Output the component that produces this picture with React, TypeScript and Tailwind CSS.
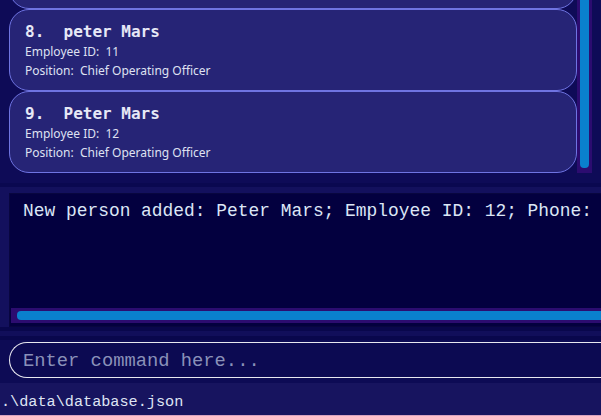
const mono = "font-['DejaVu_Sans_Mono','Liberation_Mono',monospace]";
const lightMono = "font-['Liberation_Mono','DejaVu_Sans_Mono',monospace]";
const sans = "font-['Noto_Sans','Open_Sans',sans-serif]";

type Person = { index: number; name: string; id: number; position: string };

const people: Person[] = [
  { index: 8, name: "peter Mars", id: 11, position: "Chief Operating Officer" },
  { index: 9, name: "Peter Mars", id: 12, position: "Chief Operating Officer" },
];

function PersonCard({ p }: { p: Person }) {
  return (
    <div className="h-[82px] shrink-0 rounded-[20px] border border-[#6f74e2] bg-[#262476] pl-[15px] pt-[12px]">
      <div className={`${mono} text-[16px] font-bold leading-[20px] text-[#e6e8f6] whitespace-pre`}>
        {p.index}.  {p.name}
      </div>
      <div className={`${sans} text-[12px] leading-[19px] text-[#dfe1f2] whitespace-pre`}>
        Employee ID:  {p.id}
      </div>
      <div className={`${sans} text-[12px] leading-[19px] text-[#dfe1f2] whitespace-pre`}>
        Position:  {p.position}
      </div>
    </div>
  );
}

export default function App() {
  return (
    <div className="w-[601px] h-[416px] overflow-hidden bg-[#0e0b57] flex flex-col">
      {/* person list, scrolled to the bottom */}
      <div className="h-[173px] shrink-0 flex">
        <div className="flex-1 pl-[9px] flex flex-col justify-end overflow-hidden">
          {/* previous card, only its bottom edge is in view */}
          <div className="h-[82px] shrink-0 rounded-[20px] border border-[#6f74e2] bg-[#262476]" />
          {people.map((p) => (
            <PersonCard key={p.index} p={p} />
          ))}
        </div>
        <div className="w-[15px] h-[173px] bg-[#2c0c70] px-[3px]">
          <div className="h-[168px] w-full rounded-b-[4px] bg-[#0a80cd]" />
        </div>
        <div className="w-[9px]" />
      </div>

      <div className="h-[10px] shrink-0" />
      <div className="h-[4px] shrink-0 bg-[#0a0850]" />

      {/* result display */}
      <div className="shrink-0 bg-[#13105d] pl-[9px] pt-[6px]">
        <div className="h-[134px] border border-r-0 border-[#08063f] bg-[#03003f] flex flex-col">
          <div
            className={`${lightMono} flex-1 pl-[13px] pt-[6px] text-[17.9px] leading-[22px] text-[#dce6f6] whitespace-pre overflow-hidden`}
          >
            New person added: Peter Mars; Employee ID: 12; Phone:
          </div>
          <div className="h-[15px] ml-[1px] mb-[3px] bg-[#2c0c70] pt-[3px] pl-[6px]">
            <div className="h-[9px] rounded-l-[4px] bg-[#0a80cd]" />
          </div>
        </div>
      </div>

      <div className="h-[4px] shrink-0 bg-[#09074c]" />
      <div className="h-[5px] shrink-0 bg-[#110e5a]" />
      <div className="h-[4px] shrink-0 bg-[#09074c]" />

      {/* command box */}
      <div className="h-[43px] shrink-0 bg-[#0d0b55] pl-[9px] pt-[2px]">
        <div className="h-[36px] rounded-l-full border border-r-0 border-[#e8e8f0] bg-[#0c0a52] pl-[13px] flex items-center">
          <span className={`${lightMono} text-[18.8px] leading-[22px] pt-[2px] text-[#8a91b9] whitespace-pre`}>
            Enter command here...
          </span>
        </div>
      </div>

      {/* status bar */}
      <div className="flex-1 bg-[#17145f] border-b border-[#d7a3c0] flex items-center pl-[1px] pt-[6px]">
        <span className={`${lightMono} text-[15.2px] text-[#dfe4f3] whitespace-pre`}>
          .\data\database.json
        </span>
      </div>
    </div>
  );
}
